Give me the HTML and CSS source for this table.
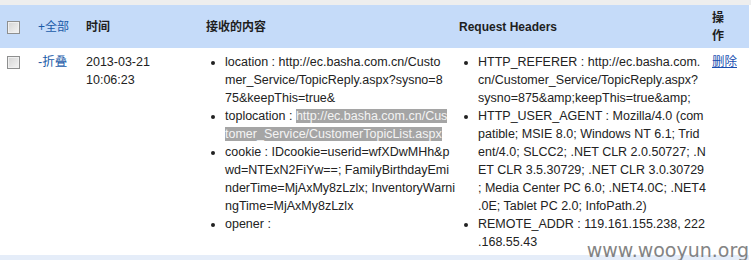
FILE: index.html
```html
<!DOCTYPE html>
<html lang="zh-CN">
<head>
    <meta charset="UTF-8">
    <title>接收的内容</title>
    <link rel="stylesheet" href="styles.css">
</head>
<body>
    <table class="log-table">
        <colgroup>
            <col class="c-check">
            <col class="c-toggle">
            <col class="c-time">
            <col class="c-content">
            <col class="c-headers">
            <col class="c-op">
        </colgroup>
        <thead>
            <tr>
                <th><input type="checkbox" class="chk"></th>
                <th><a href="#" class="toggle">+全部</a></th>
                <th>时间</th>
                <th>接收的内容</th>
                <th>Request Headers</th>
                <th><span class="op-title">操作</span></th>
            </tr>
        </thead>
        <tbody>
            <tr>
                <td><input type="checkbox" class="chk"></td>
                <td><a href="#" class="toggle">-折叠</a></td>
                <td>2013-03-21<br>10:06:23</td>
                <td>
                    <ul class="kv">
                        <li>location : http://ec.basha.com.cn/Custo<br>mer_Service/TopicReply.aspx?sysno=8<br>75&amp;keepThis=true&amp;</li>
                        <li>toplocation : <span class="sel">http://ec.basha.com.cn/Cus<br>tomer_Service/CustomerTopicList.aspx</span></li>
                        <li>cookie : IDcookie=userid=wfXDwMHh&amp;p<br>wd=NTExN2FiYw==; FamilyBirthdayEmi<br>nderTime=MjAxMy8zLzlx; InventoryWarni<br>ngTime=MjAxMy8zLzlx</li>
                        <li>opener : </li>
                    </ul>
                </td>
                <td>
                    <ul class="kv">
                        <li>HTTP_REFERER : http://ec.basha.com.<br>cn/Customer_Service/TopicReply.aspx?<br>sysno=875&amp;amp;keepThis=true&amp;amp;</li>
                        <li>HTTP_USER_AGENT : Mozilla/4.0 (com<br>patible; MSIE 8.0; Windows NT 6.1; Trid<br>ent/4.0; SLCC2; .NET CLR 2.0.50727; .N<br>ET CLR 3.5.30729; .NET CLR 3.0.30729<br>; Media Center PC 6.0; .NET4.0C; .NET4<br>.0E; Tablet PC 2.0; InfoPath.2)</li>
                        <li>REMOTE_ADDR : 119.161.155.238, 222<br>.168.55.43</li>
                    </ul>
                </td>
                <td><a href="#" class="del">删除</a></td>
            </tr>
            <tr class="row-alt">
                <td colspan="6"></td>
            </tr>
        </tbody>
    </table>

    <div class="watermark">www.wooyun.org</div>
</body>
</html>
```

FILE: styles.css
```css
body {
    margin: 0;
    border-top: 5px solid #eeeeee;
    background: #fff;
    color: #222;
    font-family: "Liberation Sans", Arial, "Noto Sans CJK SC", sans-serif;
    font-size: 12.5px;
    line-height: 18px;
    position: relative;
    height: 255px;
    overflow: hidden;
}
.log-table {
    width: 749px;
    border-collapse: collapse;
    table-layout: fixed;
}
.c-check { width: 30px; }
.c-toggle { width: 48px; }
.c-time { width: 120px; }
.c-content { width: 253px; }
.c-headers { width: 253px; }
.c-op { width: 45px; }

th {
    background-color: #c5dbf9;
    text-align: left;
    font-weight: bold;
    font-size: 12px;
    color: #1e1e1e;
    padding: 4px 4px 3px 8px;
    vertical-align: middle;
}
td {
    padding: 5px 0 4px 8px;
    vertical-align: top;
}
th:first-child, td:first-child {
    padding-left: 7px;
    padding-right: 0;
}
.chk {
    -webkit-appearance: none;
    appearance: none;
    width: 13px;
    height: 13px;
    margin: 0;
    border: 1px solid #8e8f8f;
    background: linear-gradient(135deg, #d4d4d4, #f4f4f4);
    box-shadow: inset 0 0 0 1px #f0f0f0;
    vertical-align: middle;
}
td .chk {
    margin-top: 3px;
    vertical-align: top;
}
.toggle {
    color: #1a5aa8;
    text-decoration: none;
    font-weight: normal;
}
.op-title {
    display: block;
    width: 14px;
}
.kv {
    margin: 0;
    padding-left: 19px;
    list-style: disc;
    white-space: nowrap;
}
.sel {
    background-color: #a5a5a5;
    color: #f4f4f4;
}
.del {
    color: #1a4fb0;
    text-decoration: underline;
}
.row-alt td {
    background-color: #e5edf9;
    height: 20px;
    padding: 0;
}
.watermark {
    position: absolute;
    right: 2px;
    bottom: -1px;
    font-family: "DejaVu Sans", sans-serif;
    font-size: 19px;
    line-height: 22px;
    color: #6f6f6f;
    opacity: 0.85;
}
```
